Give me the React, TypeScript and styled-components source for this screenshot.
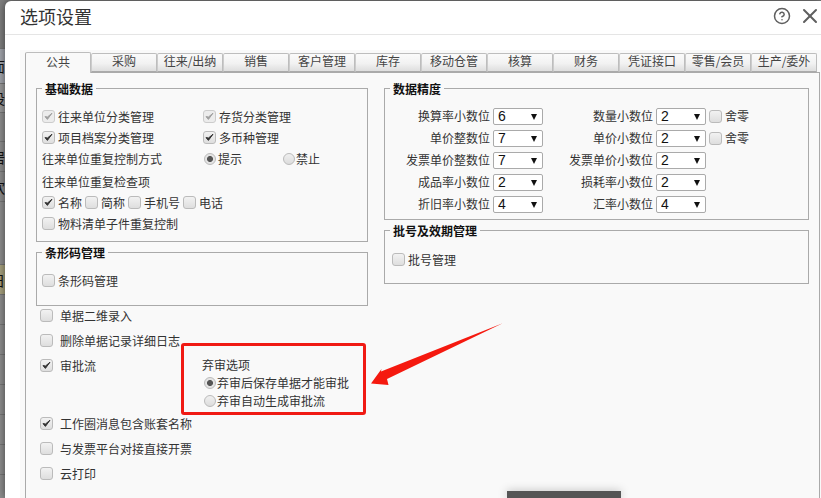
import React from "react";
import styled, { createGlobalStyle } from "styled-components";
import { CircleHelp, X } from "lucide-react";

const Global = createGlobalStyle`
  html, body { margin: 0; padding: 0; background: #8f8f8f; }
  * { box-sizing: border-box; }
`;

const Page = styled.div`
  position: relative;
  width: 821px;
  height: 498px;
  overflow: hidden;
  font: 12px/18px "Noto Sans CJK SC", "Liberation Sans", sans-serif;
  color: #333;
`;

const Backdrop = styled.div`
  width: 821px;
  height: 498px;
  background: #8e8e8e;
  display: flex;
  flex-direction: column;
`;

const BackRow = styled.div<{ $h: number; $bg?: string }>`
  height: ${(p) => p.$h}px;
  flex: none;
  background: ${(p) => p.$bg ?? "#8e8e8e"};
  border-bottom: 1px solid #777;
  overflow: hidden;
  display: flex;
  align-items: center;
  color: #111;
  font-size: 14px;
  white-space: nowrap;
`;

const BackGlyph = styled.span`
  margin-left: -9px;
`;

const Modal = styled.div`
  position: absolute;
  left: 5px;
  top: 1px;
  right: 0;
  bottom: 0;
  background: #fff;
  border-radius: 6px 0 0 0;
  box-shadow: 0 0 8px rgba(0, 0, 0, 0.55);
  display: flex;
  flex-direction: column;
`;

const Header = styled.header`
  height: 34px;
  flex: none;
  border-bottom: 1px solid #e5e5e5;
  display: flex;
  align-items: flex-start;
  padding: 5px 1px 0 15px;
  gap: 8px;
`;

const Title = styled.h1`
  margin: -5px auto 0 0;
  font-size: 18px;
  font-weight: 400;
  line-height: 30px;
  color: #333;
`;

const HeaderButton = styled.span`
  display: flex;
  width: 20px;
  height: 20px;
  align-items: center;
  justify-content: center;
  color: #5f5f5f;
  & > svg {
    flex: none;
  }
`;

const Body = styled.div`
  flex: 1;
  min-height: 0;
  padding: 15px 0 0 15px;
`;

const Settings = styled.div`
  height: 100%;
  background: #f9f9f9;
  padding: 2px 1px 0 5px;
  display: flex;
  flex-direction: column;
`;

const TabBar = styled.div`
  display: flex;
  height: 20px;
  flex: none;
  align-items: flex-end;
  position: relative;
  z-index: 1;
`;

const Tab = styled.div<{ $active?: boolean }>`
  width: 66px;
  height: ${(p) => (p.$active ? "21px" : "19px")};
  margin-bottom: ${(p) => (p.$active ? "-1px" : "0")};
  border: 1px solid #bdbdbd;
  border-left-color: ${(p) => (p.$active ? "#aaa" : "#ccc")};
  border-bottom: ${(p) => (p.$active ? "none" : "1px solid #aaa")};
  border-radius: 2px 2px 0 0;
  background: ${(p) =>
    p.$active ? "#f9f9f9" : "linear-gradient(#fafafa 0%, #f2f2f2 55%, #dedede 100%)"};
  text-align: center;
  line-height: ${(p) => (p.$active ? "17px" : "14px")};
  font-size: 12px;
  color: #444;
  white-space: nowrap;
`;

const TabPanel = styled.div`
  flex: 1;
  min-height: 0;
  border: 1px solid #aaa;
  border-bottom: none;
  padding: 7px 10px 0 10px;
`;

const Columns = styled.div`
  display: grid;
  grid-template-columns: 332px 425px;
  gap: 16px;
  align-items: start;
`;

const Column = styled.div`
  display: flex;
  flex-direction: column;
  gap: 2px;
`;

const Group = styled.fieldset<{ $pt: number; $pb: number }>`
  margin: 0;
  min-width: 0;
  border: 1px solid #aaa;
  padding: ${(p) => p.$pt}px 5px ${(p) => p.$pb}px 5px;
`;

const Legend = styled.legend`
  padding: 0 3px;
  font-size: 12px;
  font-weight: 700;
  line-height: 17px;
  color: #111;
`;

const BasicGrid = styled.div`
  display: grid;
  grid-template-columns: 161px 1fr;
  grid-template-rows: 21px 21px 21px 23px 21px 21px;
  align-items: end;
`;

const Row = styled.div<{ $gap?: number; $ml?: number }>`
  display: flex;
  align-items: center;
  gap: ${(p) => p.$gap ?? 3}px;
  height: 21px;
  margin-left: ${(p) => p.$ml ?? 0}px;
  white-space: nowrap;
`;

const WideRow = styled(Row)`
  grid-column: 1 / -1;
`;

const Box = styled.span<{ $off?: boolean }>`
  flex: none;
  width: 13px;
  height: 13px;
  border: 1px solid ${(p) => (p.$off ? "#ccc" : "#bbb")};
  border-radius: 3px;
  background: ${(p) => (p.$off ? "#ececec" : "linear-gradient(#f2f2f2, #dedede)")};
  display: flex;
  align-items: center;
  justify-content: center;
  color: ${(p) => (p.$off ? "#a0a0a0" : "#333")};
`;

const Dot = styled.span<{ $on?: boolean; $mr: number; $ml?: number }>`
  flex: none;
  width: 12px;
  height: 12px;
  border: 1px solid #bbb;
  border-radius: 50%;
  margin-left: ${(p) => p.$ml ?? 0}px;
  margin-right: ${(p) => p.$mr}px;
  background: ${(p) =>
    p.$on
      ? "radial-gradient(circle, #555 0 2.6px, #e4e4e4 3.4px)"
      : "linear-gradient(#f0f0f0, #dcdcdc)"};
`;

const Check = ({ on, off }: { on?: boolean; off?: boolean }) => (
  <Box $off={off}>
    {on && (
      <svg width="9" height="9" viewBox="0 0 9 9">
        <path d="M1 4.6 L3.4 7.4 L8 1.2 L3.5 5 Z" fill="currentColor" stroke="currentColor" strokeWidth="1" strokeLinejoin="round" />
      </svg>
    )}
  </Box>
);

const Choice = styled.span<{ $ml?: number }>`
  display: inline-flex;
  align-items: center;
  margin-left: ${(p) => p.$ml ?? 0}px;
`;

const PrecisionGrid = styled.div`
  display: grid;
  grid-template-columns: 100px 50px 107px 50px 13px auto;
  column-gap: 3px;
  grid-auto-rows: 22px;
  align-items: center;
`;

const FieldLabel = styled.span`
  text-align: right;
  white-space: nowrap;
`;

const SelectWrap = styled.span`
  position: relative;
  display: block;
  width: 50px;
  height: 17px;
  &::after {
    content: "";
    position: absolute;
    right: 6px;
    top: 6px;
    border-left: 3px solid transparent;
    border-right: 3px solid transparent;
    border-top: 6px solid #111;
    pointer-events: none;
  }
`;

const Select = styled.select`
  appearance: none;
  display: block;
  width: 50px;
  height: 17px;
  border: 1px solid #aaa;
  border-radius: 2px;
  background: #fff;
  padding: 0 0 0 4px;
  margin: 0;
  font: 14px/15px "Liberation Sans", sans-serif;
  color: #111;
`;

const Num = ({ v }: { v: string }) => (
  <SelectWrap>
    <Select defaultValue={v} aria-label="小数位">
      <option>{v}</option>
    </Select>
  </SelectWrap>
);

const Extras = styled.div`
  margin: 0 0 0 4px;
  display: flex;
  flex-direction: column;
  gap: 5px;
`;

const ExtraRow = styled.div<{ $h?: number }>`
  height: ${(p) => p.$h ?? 20}px;
  display: grid;
  grid-template-columns: 13px 143px auto;
  column-gap: 7px;
  align-items: start;
  line-height: 20px;
  white-space: nowrap;
  & > span:first-child {
    margin-top: 3px;
  }
`;

const Abandon = styled.div`
  display: flex;
  flex-direction: column;
  line-height: 18px;
  margin-left: -7px;
`;

const AbandonTitle = styled.span`
  margin-left: -1px;
`;

const AbandonRow = styled.div`
  display: flex;
  align-items: center;
  height: 18px;
`;

const Annotation = styled.div`
  position: absolute;
  left: 181px;
  top: 343px;
  width: 185px;
  height: 72px;
  border: 3px solid #f01a14;
  border-radius: 3px;
  pointer-events: none;
`;

const Arrow = styled.svg`
  position: absolute;
  left: 360px;
  top: 315px;
`;

const Toast = styled.div`
  position: absolute;
  left: 507px;
  top: 491px;
  width: 114px;
  height: 7px;
  background: #555;
  box-shadow: 0 0 10px rgba(0, 0, 0, 0.25);
`;

const tabs = ["公共", "采购", "往来/出纳", "销售", "客户管理", "库存", "移动仓管", "核算", "财务", "凭证接口", "零售/会员", "生产/委外"];

export default function App() {
  return (
    <Page>
      <Global />
      <Backdrop>
        <BackRow $h={49} $bg="#7f7f7f"><BackGlyph>X</BackGlyph></BackRow>
        <BackRow $h={35} $bg="#a3a6ad"><BackGlyph>面</BackGlyph></BackRow>
        <BackRow $h={29} $bg="#9b9b9b"><BackGlyph>设</BackGlyph></BackRow>
        <BackRow $h={29} />
        <BackRow $h={30}><BackGlyph>居</BackGlyph></BackRow>
        <BackRow $h={30}><BackGlyph>欢</BackGlyph></BackRow>
        <BackRow $h={63} />
        <BackRow $h={30} $bg="#a8a27f"><BackGlyph>日</BackGlyph></BackRow>
        <BackRow $h={30} />
        <BackRow $h={30} />
        <BackRow $h={30} />
        <BackRow $h={30} />
        <BackRow $h={30} />
        <BackRow $h={30} />
        <BackRow $h={30} />
      </Backdrop>
      <Modal>
        <Header>
          <Title>选项设置</Title>
          <HeaderButton><CircleHelp size={18} strokeWidth={2} /></HeaderButton>
          <HeaderButton><X size={24} strokeWidth={2} /></HeaderButton>
        </Header>
        <Body>
          <Settings>
            <TabBar>
              {tabs.map((t, i) => (
                <Tab key={t} $active={i === 0}>{t}</Tab>
              ))}
            </TabBar>
            <TabPanel>
              <Columns>
                <Column>
                  <Group $pt={9} $pb={7}>
                    <Legend>基础数据</Legend>
                    <BasicGrid>
                      <Row><Check on off />往来单位分类管理</Row>
                      <Row><Check on off />存货分类管理</Row>
                      <Row><Check on />项目档案分类管理</Row>
                      <Row><Check on />多币种管理</Row>
                      <Row>往来单位重复控制方式</Row>
                      <Row $gap={0}>
                        <Choice><Dot $on $mr={2} $ml={1} />提示</Choice>
                        <Choice $ml={41}><Dot $mr={1} />禁止</Choice>
                      </Row>
                      <WideRow>往来单位重复检查项</WideRow>
                      <WideRow><Check on />名称<Check />简称<Check />手机号<Check />电话</WideRow>
                      <WideRow><Check />物料清单子件重复控制</WideRow>
                    </BasicGrid>
                  </Group>
                  <Group $pt={9} $pb={14}>
                    <Legend>条形码管理</Legend>
                    <Row><Check />条形码管理</Row>
                  </Group>
                </Column>
                <Column>
                  <Group $pt={8} $pb={4}>
                    <Legend>数据精度</Legend>
                    <PrecisionGrid>
                      <FieldLabel>换算率小数位</FieldLabel><Num v="6" />
                      <FieldLabel>数量小数位</FieldLabel><Num v="2" /><Check /><span>舍零</span>
                      <FieldLabel>单价整数位</FieldLabel><Num v="7" />
                      <FieldLabel>单价小数位</FieldLabel><Num v="2" /><Check /><span>舍零</span>
                      <FieldLabel>发票单价整数位</FieldLabel><Num v="7" />
                      <FieldLabel>发票单价小数位</FieldLabel><Num v="2" /><span /><span />
                      <FieldLabel>成品率小数位</FieldLabel><Num v="2" />
                      <FieldLabel>损耗率小数位</FieldLabel><Num v="2" /><span /><span />
                      <FieldLabel>折旧率小数位</FieldLabel><Num v="4" />
                      <FieldLabel>汇率小数位</FieldLabel><Num v="4" /><span /><span />
                    </PrecisionGrid>
                  </Group>
                  <Group $pt={10} $pb={13}>
                    <Legend>批号及效期管理</Legend>
                    <Row $ml={2}><Check />批号管理</Row>
                  </Group>
                </Column>
              </Columns>
              <Extras>
                <ExtraRow><Check /><span>单据二维录入</span></ExtraRow>
                <ExtraRow><Check /><span>删除单据记录详细日志</span></ExtraRow>
                <ExtraRow $h={53}>
                  <Check on />
                  <span>审批流</span>
                  <Abandon>
                    <AbandonTitle>弃审选项</AbandonTitle>
                    <AbandonRow><Dot $on $mr={1} $ml={1} />弃审后保存单据才能审批</AbandonRow>
                    <AbandonRow><Dot $mr={1} $ml={1} />弃审自动生成审批流</AbandonRow>
                  </Abandon>
                </ExtraRow>
                <ExtraRow><Check on /><span>工作圈消息包含账套名称</span></ExtraRow>
                <ExtraRow><Check /><span>与发票平台对接直接开票</span></ExtraRow>
                <ExtraRow><Check /><span>云打印</span></ExtraRow>
              </Extras>
            </TabPanel>
          </Settings>
        </Body>
      </Modal>
      <Annotation />
      <Arrow width="150" height="75" viewBox="360 315 150 75">
        <polygon points="371,383.5 381.5,369 381,371.5 502.7,323.3 387,379 388.5,385" fill="#f5190f" />
      </Arrow>
      <Toast />
    </Page>
  );
}
